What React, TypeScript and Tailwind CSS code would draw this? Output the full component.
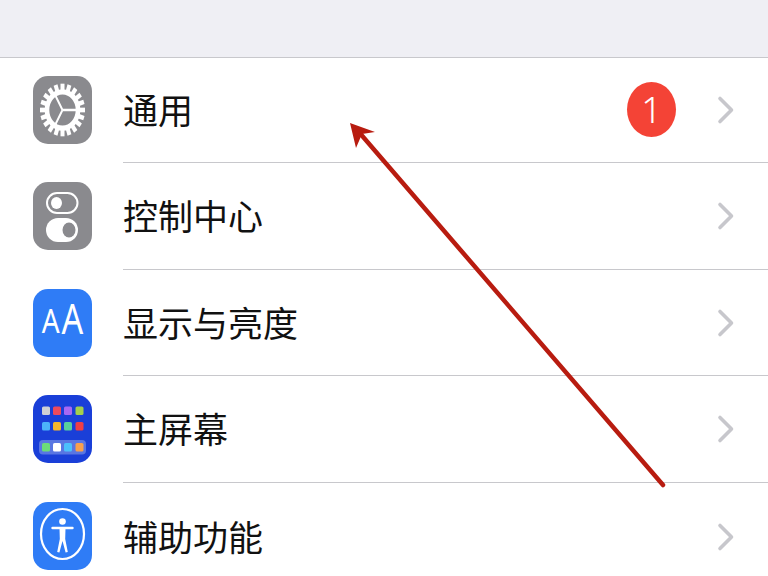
const teeth = Array.from({ length: 20 }, (_, i) => i * 18);

const GearIcon = () => (
  <svg viewBox="0 0 59 68" className="w-[59px] h-[68px]">
    <rect width="59" height="68" rx="15" fill="#8a8a8e" />
    <g transform="translate(29.5 34) scale(1 1.17)">
      {teeth.map((a) => (
        <rect key={a} x="-2" y="-22.5" width="4" height="6" fill="#fff" transform={`rotate(${a})`} />
      ))}
      <circle r="15.5" fill="none" stroke="#fff" strokeWidth="4.6" />
      <path d="M0 0L15 0M0 0L-7.5 -13M0 0L-7.5 13" stroke="#fff" strokeWidth="2" fill="none" />
    </g>
  </svg>
);

const ToggleIcon = () => (
  <svg viewBox="0 0 59 68" className="w-[59px] h-[68px]">
    <rect width="59" height="68" rx="15" fill="#8a8a8e" />
    <rect x="14" y="11" width="30.5" height="20" rx="10" fill="none" stroke="#fff" strokeWidth="2" />
    <ellipse cx="23.5" cy="21" rx="5.5" ry="6" fill="#fff" />
    <rect x="13" y="36" width="32" height="24" rx="12" fill="#fff" />
    <ellipse cx="36" cy="48" rx="6.5" ry="7.5" fill="#8a8a8e" />
  </svg>
);

const DisplayIcon = () => (
  <div className="w-[59px] h-[68px] rounded-[15px] bg-[#2f7cf6] flex items-center justify-center gap-[2px] text-white font-['Noto_Sans',sans-serif] font-normal">
    <span className="text-[28px] leading-none scale-y-[1.16] origin-bottom translate-y-[-1px]">A</span>
    <span className="text-[34px] leading-none scale-y-[1.22] origin-bottom translate-y-[-1px]">A</span>
  </div>
);

const topDots = [
  ["#d0d0d4", "#ef4a5c", "#a868f4", "#a4d04c"],
  ["#4cb4fa", "#f6b62c", "#58cf9c", "#ef3e44"],
];
const dockDots = ["#6cdc78", "#ffffff", "#4cc0fb", "#f8a04c"];
const dotX = [9, 20, 31, 42.5];

const HomeIcon = () => (
  <svg viewBox="0 0 59 68" className="w-[59px] h-[68px]">
    <rect width="59" height="68" rx="15" fill="#1a3fd8" />
    {topDots.map((row, r) =>
      row.map((c, i) => (
        <rect key={`${r}-${i}`} x={dotX[i]} y={r === 0 ? 11.5 : 27} width="8" height="8.5" rx="1.6" fill={c} />
      ))
    )}
    <rect x="6" y="45" width="47" height="14.5" rx="4" fill="#6f8ae6" fillOpacity="0.75" />
    {dockDots.map((c, i) => (
      <rect key={c} x={dotX[i]} y="48" width="8" height="8.5" rx="1.6" fill={c} />
    ))}
  </svg>
);

const AccessIcon = () => (
  <svg viewBox="0 0 59 68" className="w-[59px] h-[68px]">
    <rect width="59" height="68" rx="15" fill="#2f7cf6" />
    <ellipse cx="29.5" cy="32" rx="21.5" ry="25" fill="none" stroke="#fff" strokeWidth="2.2" />
    <circle cx="29.5" cy="19.5" r="3.3" fill="#fff" />
    <path d="M19.5 26L39.5 26" stroke="#fff" strokeWidth="2.4" strokeLinecap="round" />
    <path d="M26.5 26.5L32.5 26.5L32.2 37L34.8 50L32.6 50.5L29.5 39L26.4 50.5L24.2 50L26.8 37Z" fill="#fff" />
  </svg>
);

const Chevron = () => (
  <svg width="18" height="30" viewBox="0 0 18 30" className="block">
    <path d="M3 3.5L14.5 15L3 26.5" fill="none" stroke="#c7c7cc" strokeWidth="3.6" strokeLinecap="round" strokeLinejoin="round" />
  </svg>
);

const rows = [
  { label: "通用", icon: <GearIcon />, badge: true, h: "h-[105px]" },
  { label: "控制中心", icon: <ToggleIcon />, h: "h-[107px]" },
  { label: "显示与亮度", icon: <DisplayIcon />, h: "h-[106px]" },
  { label: "主屏幕", icon: <HomeIcon />, h: "h-[107px]" },
  { label: "辅助功能", icon: <AccessIcon />, h: "h-[107px]" },
];

export default function App() {
  return (
    <div className="relative w-[768px] h-[576px] overflow-hidden bg-white font-['Noto_Sans_CJK_SC',sans-serif]">
      <div className="h-[58px] bg-[#efeff4] border-b border-[#c8c8cc]" />
      {rows.map((row, i) => (
        <div key={row.label} className={`flex items-center pl-[33px] ${row.h}`}>
          <div className="shrink-0 w-[59px] h-[68px] mb-[1px]">{row.icon}</div>
          <div className={`flex items-center h-full flex-1 ml-[31px] pr-[33px] ${i < rows.length - 1 ? "border-b border-[#c8c8cc]" : ""}`}>
            <span className="text-[35px] leading-none text-[#111] flex-1 pb-[3px]">{row.label}</span>
            {row.badge && (
              <span className="flex items-center justify-center w-[49px] h-[55px] mb-[1px] rounded-[50%] bg-[#f44336] text-white text-[36px] font-light font-['Noto_Sans',sans-serif] mr-[41px]">
                1
              </span>
            )}
            <Chevron />
          </div>
        </div>
      ))}
      <svg viewBox="0 0 768 576" className="absolute inset-0 w-[768px] h-[576px] pointer-events-none">
        <path d="M663 485L358 131" stroke="#b81c10" strokeWidth="4.5" strokeLinecap="round" fill="none" />
        <path d="M350 123L375 132L362 134L356 148Z" fill="#b81c10" />
      </svg>
    </div>
  );
}
